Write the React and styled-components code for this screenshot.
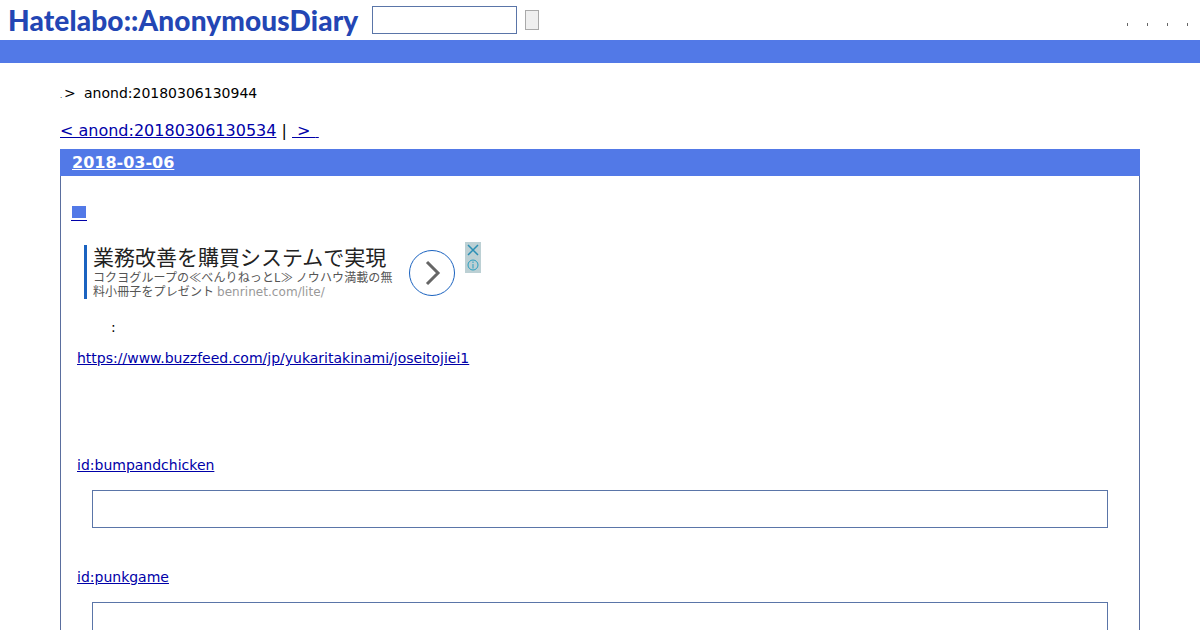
import styled, { createGlobalStyle } from 'styled-components';

const GlobalStyle = createGlobalStyle`
    html, body {
        margin: 0;
        padding: 0;
        height: 630px;
        overflow: hidden;
        background: #fff;
        font-family: "DejaVu Sans", "Noto Sans CJK JP", sans-serif;
        font-size: 14px;
        color: #000;
    }
    a {
        color: #0000a8;
    }
`

const Header = styled.header`
    height: 40px;
    display: flex;
    align-items: center;
    padding: 0 11px 0 8px;
    box-sizing: border-box;
`
const Logo = styled.h1`
    margin: 0;
    width: 364px;
    font-family: "Lato", sans-serif;
    font-size: 28px;
    font-weight: 900;
    letter-spacing: 0.14px;
    color: #2346b4;
    white-space: nowrap;
`
const SearchForm = styled.form`
    display: flex;
    align-items: center;
    gap: 8px;
    flex: 1;
`
const SearchInput = styled.input`
    width: 145px;
    height: 28px;
    box-sizing: border-box;
    border: 1px solid #5a75a8;
    background: #fff;
    padding: 0;
`
const SearchButton = styled.button`
    width: 14px;
    height: 20px;
    box-sizing: border-box;
    border: 1px solid #a9a9a9;
    border-radius: 0;
    background: #efefef;
    padding: 0;
`
const HeaderLinks = styled.nav`
    display: flex;
    gap: 17px;
`
const Dot = styled.span`
    width: 3px;
    height: 3px;
    margin-top: 8px;
    display: flex;
    justify-content: center;
    &::before {
        content: "";
        width: 1px;
        height: 3px;
        background: #666;
    }
`
const BlueBar = styled.div`
    height: 23px;
    background: #5279e7;
`
const Main = styled.main`
    padding: 22px 60px 0;
`
const Breadcrumb = styled.div`
    display: flex;
    align-items: baseline;
    height: 17px;
    line-height: 17px;
    font-size: 14px;
`
const Period = styled.span`
    font-size: 7px;
    width: 4px;
`
const Arrow = styled.span`
    width: 20px;
`
const Pager = styled.div`
    margin-top: 19px;
    height: 19px;
    line-height: 19px;
    font-size: 16px;
    white-space: pre;
`
const Section = styled.section`
    margin-top: 9px;
    border: 1px solid #5a6e9e;
    border-top: none;
    height: 500px;
`
const DateHeading = styled.h2`
    margin: 0 -1px;
    height: 27px;
    line-height: 27px;
    padding-left: 12px;
    background: #5279e7;
    font-size: 16px;
    font-weight: 700;
    a {
        color: #fff;
    }
`
const Entry = styled.div`
    padding: 28px 0 0 11px;
`
const Square = styled.a`
    display: block;
    margin-left: -1px;
    width: 16px;
    height: 15px;
    font-size: 0;
    border-bottom: 1px solid #0000a8;
    box-sizing: border-box;
    &::before {
        content: "";
        display: block;
        margin: 2px 0 0 1px;
        width: 14px;
        height: 12px;
        background: #5279e7;
    }
`
const Ad = styled.div`
    margin: 21px 0 0 12px;
    width: 398px;
    height: 62px;
    display: flex;
    position: relative;
`
const AdText = styled.div`
    margin-top: 3px;
    width: 311px;
    height: 54px;
    box-sizing: border-box;
    border-left: 3px solid #1b63c0;
    padding: 1px 0 0 6px;
    color: #444;
`
const AdTitle = styled.div`
    font-family: "Noto Sans CJK JP", sans-serif;
    font-size: 21px;
    line-height: 20px;
    margin-bottom: 4px;
    color: #222;
    white-space: nowrap;
`
const AdBody = styled.div`
    font-family: "Noto Sans CJK JP", sans-serif;
    font-size: 12px;
    line-height: 14px;
    letter-spacing: 0.12px;
    color: #555;
    span {
        color: #999;
        font-family: "DejaVu Sans", sans-serif;
        letter-spacing: 0.05px;
    }
`
const AdArrow = styled.div`
    margin: 8px 0 0 14px;
    width: 44px;
    height: 44px;
    border: 1px solid #1b63c0;
    border-radius: 50%;
    display: flex;
    align-items: center;
    justify-content: center;
`
const AdBadge = styled.div`
    position: absolute;
    top: 0;
    right: 1px;
    width: 16px;
    height: 31px;
    background: #bcd0d4;
    display: flex;
    flex-direction: column;
    align-items: center;
    justify-content: space-around;
`
const Colon = styled.p`
    margin: 15px 0 0 39px;
    height: 17px;
    line-height: 17px;
`
const SourceLink = styled.p`
    margin: 14px 0 0 5px;
    height: 17px;
    line-height: 17px;
`
const Comment = styled.div`
    margin: ${(p) => p.$top}px 0 0 5px;
`
const CommentUser = styled.div`
    height: 17px;
    line-height: 17px;
`
const CommentBox = styled.div`
    margin: 16px 31px 0 15px;
    height: 38px;
    box-sizing: border-box;
    border: 1px solid #5a75a8;
`

const App = () => {
  return (
    <>
      <GlobalStyle />
      <Header>
        <Logo>Hatelabo::AnonymousDiary</Logo>
        <SearchForm onSubmit={(e) => e.preventDefault()}>
          <SearchInput type="text" />
          <SearchButton type="submit" />
        </SearchForm>
        <HeaderLinks>
          <Dot />
          <Dot />
          <Dot />
          <Dot />
        </HeaderLinks>
      </Header>
      <BlueBar />
      <Main>
        <Breadcrumb>
          <Period>.</Period>
          <Arrow>&gt;</Arrow>
          <span>anond:20180306130944</span>
        </Breadcrumb>
        <Pager>
          <a href="#prev">&lt; anond:20180306130534</a> | <a href="#next"> &gt; {'\u2009'}</a>
        </Pager>
        <Section>
          <DateHeading>
            <a href="#date">2018-03-06</a>
          </DateHeading>
          <Entry>
            <Square href="#entry" />
            <Ad>
              <AdText>
                <AdTitle>業務改善を購買システムで実現</AdTitle>
                <AdBody>
                  コクヨグループの≪べんりねっとL≫ ノウハウ満載の無料小冊子をプレゼント <span>benrinet.com/lite/</span>
                </AdBody>
              </AdText>
              <AdArrow>
                <svg width="20" height="26" viewBox="0 0 20 26" fill="none" stroke="#666" strokeWidth="3">
                  <path d="M5 2 L16 13 L5 24" />
                </svg>
              </AdArrow>
              <AdBadge>
                <svg width="12" height="12" viewBox="0 0 12 12" fill="none" stroke="#2a8fb5" strokeWidth="1.5">
                  <path d="M1 1 L11 11 M11 1 L1 11" />
                </svg>
                <svg width="12" height="12" viewBox="0 0 12 12" fill="none" stroke="#2a9fc0" strokeWidth="1">
                  <circle cx="6" cy="6" r="5" />
                  <path d="M6 5 V9.5 M6 2.5 V4" />
                </svg>
              </AdBadge>
            </Ad>
            <Colon>:</Colon>
            <SourceLink>
              <a href="#source">https://www.buzzfeed.com/jp/yukaritakinami/joseitojiei1</a>
            </SourceLink>
            <Comment $top={90}>
              <CommentUser>
                <a href="#bumpandchicken">id:bumpandchicken</a>
              </CommentUser>
              <CommentBox />
            </Comment>
            <Comment $top={41}>
              <CommentUser>
                <a href="#punkgame">id:punkgame</a>
              </CommentUser>
              <CommentBox />
            </Comment>
          </Entry>
        </Section>
      </Main>
    </>
  )
}

export default App
